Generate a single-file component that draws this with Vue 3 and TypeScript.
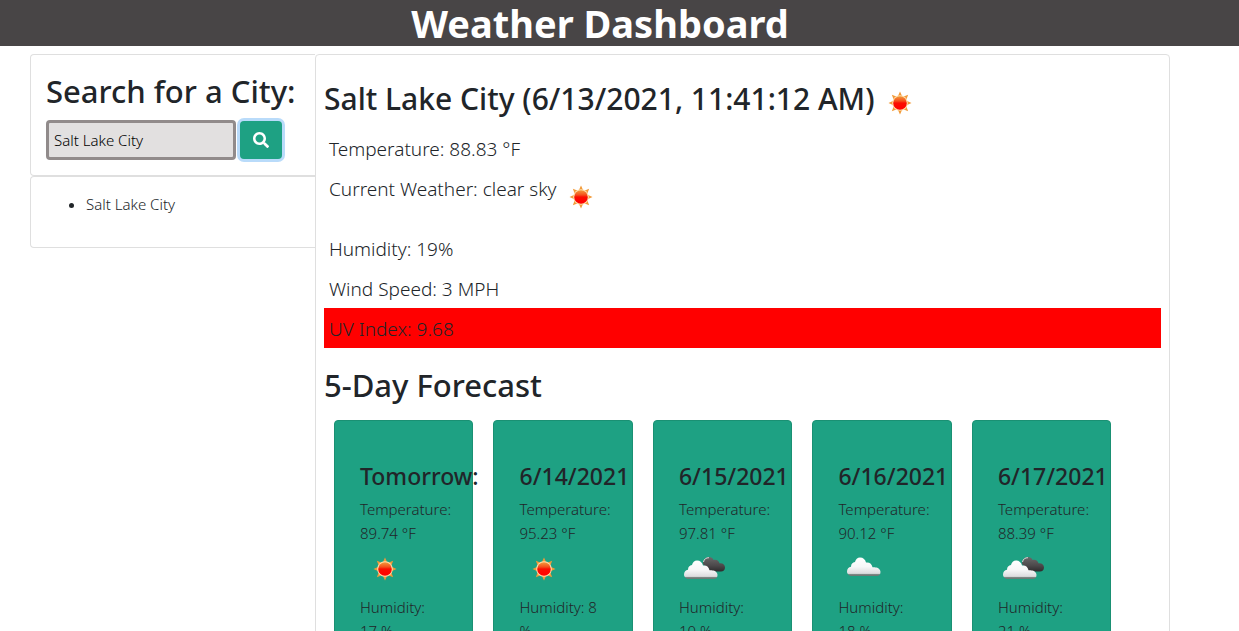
<script setup lang="ts">
import { ref } from 'vue'
import type { FunctionalComponent } from 'vue'
import { h } from 'vue'

type Sky = 'sun' | 'cloud' | 'broken'

interface Day {
  title: string
  temperature: string
  sky: Sky
  humidity: string
}

const city = ref('Salt Lake City')
const history = ref<string[]>(['Salt Lake City'])

const days: Day[] = [
  { title: 'Tomorrow:', temperature: '89.74', sky: 'sun', humidity: '17' },
  { title: '6/14/2021', temperature: '95.23', sky: 'sun', humidity: '8' },
  { title: '6/15/2021', temperature: '97.81', sky: 'broken', humidity: '10' },
  { title: '6/16/2021', temperature: '90.12', sky: 'cloud', humidity: '18' },
  { title: '6/17/2021', temperature: '88.39', sky: 'broken', humidity: '21' },
]

function search() {
  const name = city.value.trim()
  if (name && !history.value.includes(name)) history.value.push(name)
}

const cloudPath =
  'M5 18.500C2.200 18.500 0 16.600 0 14c0-2.500 1.600-4.300 4-4.700C4 6.500 5.600 4.800 8 4.600 8.600 1.800 10.500 0 13 0c3.200 0 5.500 2 6 5 3.400-.600 6 1.400 6.500 4.800 1-.3 2-.2 3 .2 2.500 0 5 1.800 5 4.500 0 2.400-1.500 4-3.500 4z'

const SkyIcon: FunctionalComponent<{ kind: Sky }> = (props) => {
  if (props.kind === 'sun') {
    return h('svg', { viewBox: '0 0 50 50', width: 50, height: 50, 'aria-hidden': 'true' }, [
      h('g', { fill: '#f29a38' },
        [0, 45, 90, 135, 180, 225, 270, 315].map((a) =>
          h('path', { d: 'M25 13.500l2.500 5.500h-5z', transform: `rotate(${a} 25 25)` }))),
      h('circle', { cx: 25, cy: 25, r: 7.8, fill: '#ffe0b0' }),
      h('circle', { cx: 25, cy: 25, r: 6.8, fill: 'url(#sun-fill)' }),
    ])
  }
  const broken = props.kind === 'broken'
  return h('svg', { viewBox: '0 0 50 50', width: 50, height: 50, 'aria-hidden': 'true' }, [
    broken
      ? h('path', {
          d: 'M24 20C24 15 27 13 30 13c2.500 0 4 1.400 4.500 3 3-1 5.500.7 6 3.300 3.200-.500 5.500 1.400 5.500 4.200 0 2.500-1.700 4-4 4H31z',
          fill: 'url(#dark-fill)',
        })
      : null,
    broken
      ? h('path', { d: 'M24.500 18c.5-3 2.700-4.300 5.500-4.300', fill: 'none', stroke: '#d5dcda', 'stroke-width': 1 })
      : null,
    h('path', { d: cloudPath, transform: broken ? 'translate(5 16.500)' : 'translate(9 13.500)', fill: 'url(#cloud-fill)' }),
  ])
}
SkyIcon.props = ['kind']
</script>

<template>
  <svg class="defs" width="0" height="0" aria-hidden="true">
    <defs>
      <linearGradient id="sun-fill" x1="0" y1="0" x2="0" y2="1">
        <stop offset="0" stop-color="#f39a3a" />
        <stop offset="0.35" stop-color="#f4501c" />
        <stop offset="0.5" stop-color="#fb0d00" />
        <stop offset="1" stop-color="#f00" />
      </linearGradient>
      <linearGradient id="cloud-fill" x1="0" y1="0" x2="0" y2="1">
        <stop offset="0" stop-color="#fff" />
        <stop offset="0.5" stop-color="#f7f7f8" />
        <stop offset="0.86" stop-color="#dcdcde" />
        <stop offset="0.92" stop-color="#7b8582" />
        <stop offset="1" stop-color="#68736f" />
      </linearGradient>
      <linearGradient id="dark-fill" x1="0" y1="0" x2="0" y2="1">
        <stop offset="0" stop-color="#6b696a" />
        <stop offset="0.6" stop-color="#4b484a" />
        <stop offset="1" stop-color="#2e2c2d" />
      </linearGradient>
    </defs>
  </svg>

  <header class="top">
    <h1>Weather Dashboard</h1>
  </header>

  <div class="layout">
    <aside>
      <form class="box search" @submit.prevent="search">
        <h2><label for="city">Search for a City:</label></h2>
        <div class="row">
          <input id="city" v-model="city" type="text" />
          <button type="submit" aria-label="Search">
            <svg viewBox="0 0 512 512" width="16" height="16" aria-hidden="true">
              <path
                fill="currentColor"
                d="M505 442.700L405.300 343c-4.500-4.500-10.600-7-17-7H372c27.600-35.300 44-79.700 44-128C416 93.100 322.900 0 208 0S0 93.100 0 208s93.100 208 208 208c48.300 0 92.700-16.400 128-44v16.300c0 6.400 2.500 12.500 7 17l99.700 99.700c9.400 9.400 24.600 9.400 33.900 0l28.300-28.300c9.400-9.400 9.400-24.600.1-34zM208 336c-70.700 0-128-57.200-128-128 0-70.700 57.200-128 128-128 70.700 0 128 57.200 128 128 0 70.700-57.200 128-128 128z"
              />
            </svg>
          </button>
        </div>
      </form>
      <div class="box history">
        <ul>
          <li v-for="name in history" :key="name">{{ name }}</li>
        </ul>
      </div>
    </aside>

    <main class="box">
      <h2 class="place">Salt Lake City (6/13/2021, 11:41:12 AM) <SkyIcon kind="sun" /></h2>
      <p>Temperature: 88.83 °F</p>
      <p class="sky">Current Weather: clear sky <SkyIcon kind="sun" /></p>
      <p>Humidity: 19%</p>
      <p>Wind Speed: 3 MPH</p>
      <p class="uv">UV Index: 9.68</p>

      <h2 class="forecast-title">5-Day Forecast</h2>
      <div class="forecast">
        <article v-for="day in days" :key="day.title">
          <h4>{{ day.title }}</h4>
          <div>Temperature: {{ day.temperature }} °F</div>
          <SkyIcon :kind="day.sky" />
          <div>Humidity: {{ day.humidity }} %</div>
        </article>
      </div>
    </main>
  </div>
</template>

<style>
body {
  margin: 0;
  background: #fff;
  color: #212529;
  font: 350 15px/24px "Noto Sans", "Open Sans", sans-serif;
}
</style>

<style scoped>
* {
  box-sizing: border-box;
}
.defs {
  position: absolute;
}
h1,
h2,
h4,
p,
ul {
  margin: 0;
}
.top {
  padding: 0 39px 0 0;
  background: #484546;
  color: #fff;
  text-align: center;
}
h1 {
  font-size: 38px;
  font-weight: 700;
  line-height: 46px;
}
h2 {
  font-size: 31px;
  font-weight: 500;
  line-height: 38px;
}
.layout {
  display: grid;
  grid-template-columns: 1fr 3fr;
  align-items: start;
  margin: 8px 69px 0 30px;
}
.box {
  border: 1px solid #dfdfdf;
  border-radius: 4px;
}
aside {
  min-width: 0;
}
aside .box {
  border-right: 0;
  border-top-right-radius: 0;
  border-bottom-right-radius: 0;
}
.search {
  padding: 17px 0 15px 15px;
}
.search h2 {
  white-space: nowrap;
}
.row {
  display: flex;
  gap: 4px;
  margin-top: 10px;
}
input {
  width: 190px;
  height: 40px;
  padding: 0 5px;
  border: 3px solid #918b8b;
  border-radius: 4px;
  background: #e2e0e0;
  color: #000;
  font: inherit;
}
button {
  display: flex;
  align-items: center;
  justify-content: center;
  width: 42px;
  height: 38px;
  margin-top: 1px;
  padding: 0;
  border: 0;
  border-radius: 4px;
  background: #1ea183;
  box-shadow: 0 0 0 3px #b9dbfa;
  color: #fff;
}
.history {
  padding: 15px 15px 31px;
}
ul {
  padding-left: 40px;
}
main {
  min-width: 0;
  min-height: 700px;
  padding: 19px 8px;
}
.place {
  display: flex;
  height: 54px;
  padding-top: 6px;
  font-size: 30px;
  white-space: nowrap;
}
.place svg,
.sky svg {
  margin-top: -2px;
}
main p {
  padding: 6px 5px 4px;
  font-size: 19px;
  line-height: 30px;
}
.sky {
  display: flex;
  height: 60px;
}
.uv {
  background: #f00;
}
.forecast-title {
  padding: 18px 0 16px;
}
.forecast {
  display: flex;
}
article {
  flex: 0 0 calc(100% / 6);
  min-width: 0;
  margin: 0 10px;
  padding: 41px 30px 25px 25px;
  border: 1px solid #1a9073;
  border-radius: 4px;
  background: #1ea183;
}
article svg {
  display: block;
  margin: -1px 0 1px;
}
h4 {
  margin-bottom: 6px;
  font-size: 23px;
  font-weight: 500;
  line-height: 29px;
  white-space: nowrap;
}
</style>
